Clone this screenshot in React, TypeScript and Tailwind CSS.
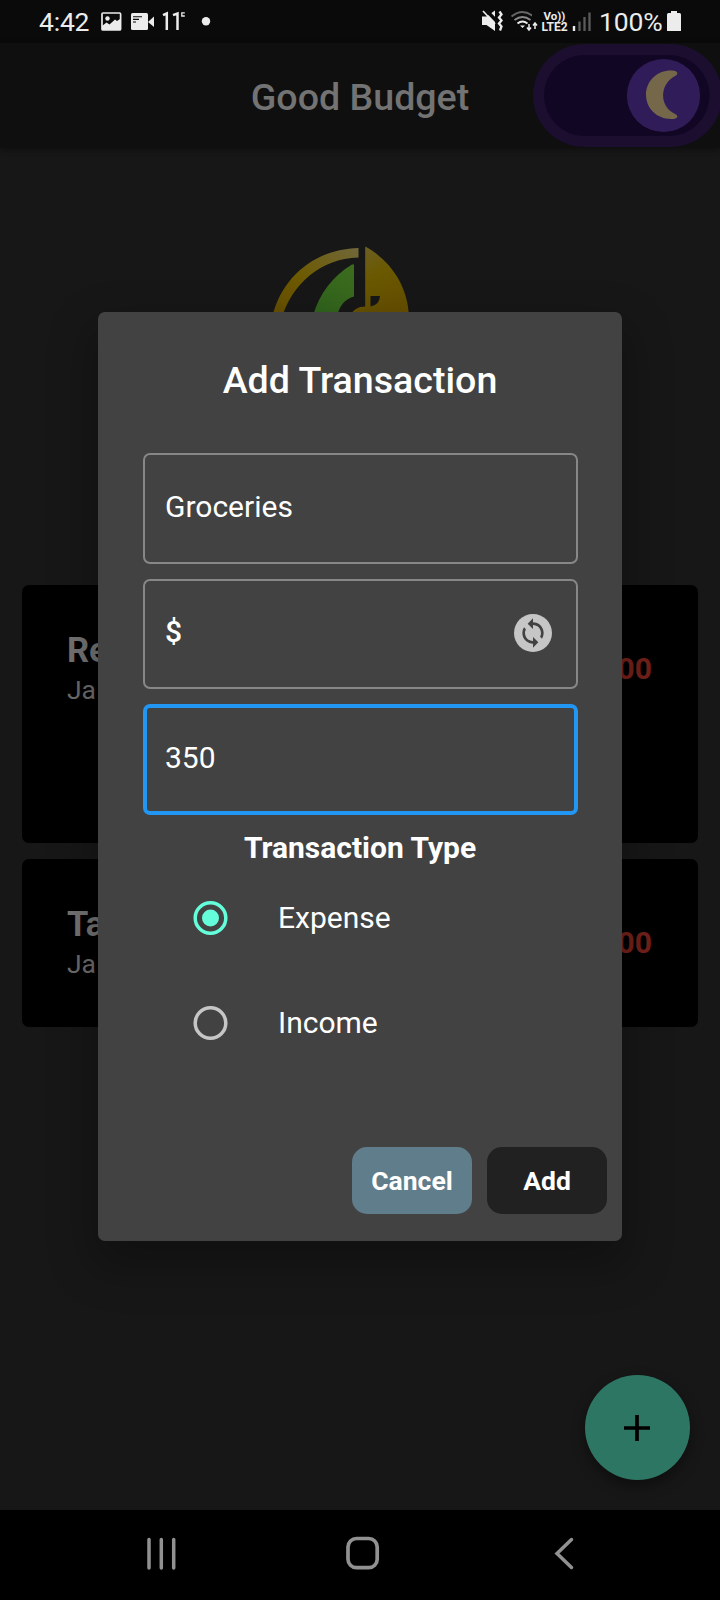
import React from "react";

function StatusBar() {
  return (
    <div className="flex h-[43px] items-center bg-[#0a0a0a] text-[#ececec]">
      <div className="ml-[39px] w-[51px] text-[26.500px] leading-[43px] tracking-[-0.2px]">4:42</div>
      <svg className="ml-[10px] h-[43px] w-[120px] shrink-0" viewBox="100 0 120 43" fill="#ececec">
        <rect x="102" y="13" width="18.6" height="17" rx="1" fill="none" stroke="#ececec" strokeWidth="1.7" />
        <path d="M102 26l4.500-3.500 3 2 5.500-5 2 1.500 3-2V30h-18z" />
        <circle cx="107.500" cy="18.500" r="2.200" />
        <rect x="131" y="13" width="17" height="17" rx="1.500" />
        <path d="M148 22l6-5.500v10.500z" />
        <path d="M133 16.800h9M133 19.400h6M133 22h3" stroke="#0a0a0a" strokeWidth="1.100" />
        <path d="M163 15.200l3.800-1.700V30M173 15.200l4.500-1.700V30" fill="none" stroke="#ececec" strokeWidth="2.500" />
        <path d="M184.800 12.800h-3v3.200h3" fill="none" stroke="#ececec" strokeWidth="1.300" />
        <circle cx="206" cy="21.200" r="4.200" />
      </svg>
      <svg className="ml-[258px] h-[43px] w-[54px] shrink-0" viewBox="478 0 54 43" fill="#ececec">
        <path d="M482 16.500h4.500l8.500-6v20.500l-8.500-6H482z" />
        <path d="M484.500 8.500L498 22.500" stroke="#0a0a0a" strokeWidth="3.500" />
        <path d="M483 11l12 13" stroke="#ececec" strokeWidth="1.700" />
        <path d="M499.500 11.500l2 3-2.500 3 2.500 3-2.500 3 2.500 3-1.500 4" fill="none" stroke="#ececec" strokeWidth="2.300" />
        <path d="M511.500 16.500q11-9 22 0" fill="none" stroke="#656565" strokeWidth="2" />
        <path d="M514.500 20q8-6 16 0" fill="none" stroke="#8a8a8a" strokeWidth="2" />
        <path d="M517.500 23.500q5-4 10 0" fill="none" stroke="#ececec" strokeWidth="2" />
        <path d="M520 25.500h5l-2.500 2.500z" />
        <path d="M529 24v6m-2-2.500l2 2.500 2-2.500" fill="none" stroke="#ececec" strokeWidth="1.500" />
      </svg>
      <div className="relative flex h-[43px] w-[36px] shrink-0 flex-col items-center justify-center font-bold">
        <svg className="absolute -left-1 top-0 h-[43px] w-[10px]" viewBox="528 0 10 43">
          <path d="M535 29v-6m-2 2.500l2-2.500 2 2.500" fill="none" stroke="#ececec" strokeWidth="1.500" />
        </svg>
        <span className="ml-[9px] text-[11.500px] leading-[11px]">Vo))</span>
        <span className="ml-[9px] text-[12px] leading-[11px]">LTE2</span>
      </div>
      <svg className="ml-[3px] h-[43px] w-[22px] shrink-0" viewBox="571 0 22 43">
        <path d="M574 26v5" stroke="#ececec" strokeWidth="2.400" />
        <path d="M579.500 21.500V31M584.500 17v14M589.500 12.500V31" stroke="#5b5b5b" strokeWidth="2.300" />
      </svg>
      <div className="ml-[6px] w-[64px] text-[26.500px] leading-[43px] tracking-[-0.150px]">100%</div>
      <svg className="ml-[4px] h-[43px] w-[15px] shrink-0" viewBox="667 0 15 43" fill="#ececec">
        <path d="M671 11h6v2h2.500q1.500 0 1.500 1.500V31h-14V14.500q0-1.500 1.500-1.500H671z" />
      </svg>
    </div>
  );
}

function ThemeToggle() {
  return (
    <svg className="absolute left-[533px] top-0 h-[105px] w-[187px]" viewBox="533 43 187 105">
      <rect x="533" y="44" width="189" height="103" rx="51.500" fill="#1c0e2f" />
      <rect x="544" y="55" width="165.500" height="81" rx="40.500" fill="#110623" />
      <circle cx="663.500" cy="95.500" r="36.600" fill="#311c5a" />
      <path
        d="M671 70.600c6-.5 8.300 3.200 4.500 5.200C659 84 659 107 675.500 114.200c3.800 2.200 1.500 5.200-4.500 4.800-14 0-25-10.500-25-24.200s11-24.200 25-24.200z"
        fill="#75684a"
      />
    </svg>
  );
}

function Logo() {
  return (
    <svg className="ml-[260px] mt-[92px] h-[100px] w-[200px]" viewBox="0 0 200 100">
      <defs>
        <linearGradient id="ring" x1="1" y1="0" x2="0" y2="1">
          <stop offset="0" stopColor="#71683b" />
          <stop offset=".55" stopColor="#6d5a00" />
          <stop offset="1" stopColor="#654f00" />
        </linearGradient>
        <linearGradient id="wedge" x1="0" y1="0" x2=".4" y2="1">
          <stop offset="0" stopColor="#6c612b" />
          <stop offset=".5" stopColor="#6a5900" />
          <stop offset="1" stopColor="#665000" />
        </linearGradient>
        <linearGradient id="leaf" x1="1" y1="0" x2="0" y2="1">
          <stop offset="0" stopColor="#3d6c1d" />
          <stop offset="1" stopColor="#2f631d" />
        </linearGradient>
      </defs>
      <path d="M12.500 76C22 37 55 9 98.500 8v9.500C60 18.500 32 45 22.500 76z" fill="url(#ring)" />
      <path d="M53 76C59 54 73 36 92 24.500q2-1 2 1v31C86 59 79 65 77.500 76z" fill="url(#leaf)" />
      <path d="M105.200 6.500C128 19 147.500 43 149 76H90q4-9.500 15.200-9.500zM110.500 56v10.500q9-1.500 9.500-10.500z" fillRule="evenodd" fill="url(#wedge)" />
    </svg>
  );
}

function TransactionCard({ title, date, amount, tall }: { title: string; date: string; amount: string; tall?: boolean }) {
  return (
    <div className={`flex justify-between rounded-[7px] bg-black pl-[45px] pr-[46px] ${tall ? "h-[258px]" : "h-[168px]"}`}>
      <div className="pt-[45px] text-[#737373]">
        <div className="text-[34.500px] font-bold leading-[40px]">{title}</div>
        <div className="mt-[4px] text-[26.500px] leading-[32px] text-[#6d6d6d]">{date}</div>
      </div>
      <div className="pt-[66px] text-[30px] font-bold leading-[36px] text-[#74201a]">{amount}</div>
    </div>
  );
}

function Field({ value, focused, medium, children }: { value: string; focused?: boolean; medium?: boolean; children?: React.ReactNode }) {
  return (
    <div
      className={`flex h-[110.670px] items-center justify-between rounded-[7px] ${
        focused ? "border-4 border-[#2196f3] px-[18px]" : "border-2 border-[#878787] px-[20px]"
      }`}
    >
      <span className={`pb-[3px] text-[30px] leading-[36px] text-white ${medium ? "font-medium" : "font-normal"}`}>{value}</span>
      {children}
    </div>
  );
}

function RadioRow({ label, checked }: { label: string; checked?: boolean }) {
  return (
    <div className="flex h-[105px] items-center pl-[92px]">
      <svg className="size-[40px]" viewBox="0 0 40 40" fill="none">
        <circle cx="20.500" cy="20" r="15.300" stroke={checked ? "#64ffda" : "#c6c6c6"} strokeWidth="3.500" />
        {checked && <circle cx="20.500" cy="20" r="8.500" fill="#64ffda" />}
      </svg>
      <span className="ml-[48px] text-[30px] leading-[36px] text-white">{label}</span>
    </div>
  );
}

function Dialog() {
  return (
    <div className="absolute left-[98px] top-[312px] flex h-[929px] w-[524px] flex-col rounded-[7px] bg-[#424242] pt-[44px] shadow-[0_20px_45px_6px_rgba(0,0,0,0.28)]">
      <h2 className="h-[97px] text-center text-[37.600px] font-medium leading-[48px] text-white">Add Transaction</h2>
      <div className="mx-[45px] flex w-[435px] flex-col gap-[15px]">
        <Field value="Groceries" />
        <Field value="$" medium>
          <svg className="mb-[1px] mr-[3px] size-[40px]" viewBox="0 0 24 24" fill="#c6c6c6">
            <circle cx="12" cy="12" r="11.400" />
            <g transform="translate(2.400 2.400) scale(.8)" fill="#424242">
              <path d="M12 4V1L8 5l4 4V6c3.310 0 6 2.690 6 6 0 1.010-.25 1.970-.7 2.800l1.460 1.460A7.930 7.930 0 0 0 20 12c0-4.420-3.580-8-8-8zm0 14c-3.310 0-6-2.690-6-6 0-1.010.25-1.970.7-2.800L5.240 7.740A7.930 7.930 0 0 0 4 12c0 4.420 3.580 8 8 8v3l4-4-4-4v3z" />
            </g>
          </svg>
        </Field>
        <Field value="350" focused />
      </div>
      <h3 className="mt-[15px] h-[50px] text-center text-[30px] font-bold leading-[36px] text-white">Transaction Type</h3>
      <div className="-mt-[14px]">
        <RadioRow label="Expense" checked />
        <RadioRow label="Income" />
      </div>
      <div className="mb-[27px] mr-[15px] mt-auto flex justify-end gap-[15px]">
        <button className="h-[67px] w-[120px] rounded-[15px] bg-[#607d8b] text-[26.500px] font-bold text-white">Cancel</button>
        <button className="h-[67px] w-[120px] rounded-[15px] bg-[#212121] text-[26.500px] font-bold text-white">Add</button>
      </div>
    </div>
  );
}

export default function App() {
  return (
    <div className="relative flex h-[1600px] w-[720px] flex-col overflow-hidden bg-[#171717] font-[Roboto,sans-serif]">
      <StatusBar />
      <header className="relative flex h-[105px] shrink-0 items-center justify-center bg-[#0f0f0f] shadow-[0_2px_6px_rgba(0,0,0,0.350)]">
        <h1 className="pt-[3px] text-[37.600px] font-medium leading-[48px] text-[#737373]">Good Budget</h1>
        <ThemeToggle />
      </header>
      <main className="flex grow flex-col">
        <div className="h-[437px]">
          <div className="-mt-[10px] h-[10px]" />
          <Logo />
        </div>
        <div className="mx-[22px] flex flex-col gap-[16px]">
          <TransactionCard title="Re" date="Ja" amount="00" tall />
          <TransactionCard title="Ta" date="Ja" amount="00" />
        </div>
      </main>
      <nav className="h-[90px] shrink-0 bg-black">
        <svg className="h-[90px] w-[720px]" viewBox="0 0 720 90" fill="none" stroke="#919191">
          <path d="M149 29.500v28.500M161.300 29.500v28.500M173.700 29.500v28.500" strokeWidth="3.500" strokeLinecap="round" />
          <rect x="348" y="28.500" width="29.200" height="29.200" rx="8.500" strokeWidth="3.700" />
          <path d="M571.500 29.500L557 43.500 571.500 57.500" strokeWidth="3.500" strokeLinecap="round" />
        </svg>
      </nav>
      <button className="absolute left-[585px] top-[1375px] flex size-[105px] items-center justify-center rounded-full bg-[#2e7664] shadow-[0_6px_14px_rgba(0,0,0,0.400)]">
        <svg className="mr-[1px] size-[26px]" viewBox="0 0 26 26" stroke="#000" strokeWidth="3.700">
          <path d="M13 0v26M0 13h26" />
        </svg>
      </button>
      <Dialog />
    </div>
  );
}
